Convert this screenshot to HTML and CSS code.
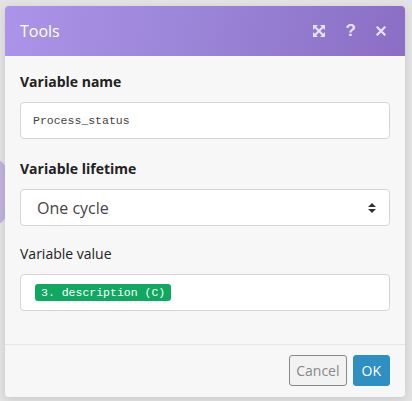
FILE: index.html
```html
<!DOCTYPE html>
<html>
<head>
<meta charset="utf-8">
<link rel="stylesheet" href="styles.css">
</head>
<body>
<div class="stage">
  <div class="peek"></div>
  <div class="modal">
    <div class="header">
      <span class="title">Tools</span>
      <div class="tools">
        <svg class="ico" width="14" height="14" viewBox="0 0 14 14" fill="none" stroke="#e8e2f7" stroke-width="2">
          <path d="M3 3 L11 11 M11 3 L3 11"/>
          <path d="M1 1 H6 L1 6 Z M13 1 H8 L13 6 Z M1 13 H6 L1 8 Z M13 13 H8 L13 8 Z" fill="#e8e2f7" stroke="none"/>
        </svg>
        <span class="q">?</span>
        <svg class="ico x" width="10" height="10" viewBox="0 0 10 10" stroke="#e8e2f7" stroke-width="2.2" stroke-linecap="square">
          <path d="M1.5 1.5 L8.5 8.5 M8.5 1.5 L1.5 8.5"/>
        </svg>
      </div>
    </div>
    <div class="body">
      <label class="lbl bold">Variable name</label>
      <div class="field mono">Process_status</div>
      <label class="lbl bold gap">Variable lifetime</label>
      <div class="field select">
        <span>One cycle</span>
        <svg width="8" height="12" viewBox="0 0 8 12" fill="#333"><path d="M4 1 L8 5 H0 Z M0 7 H8 L4 11 Z"/></svg>
      </div>
      <label class="lbl gap2">Variable value</label>
      <div class="field value"><span class="pill">3. description (C)</span></div>
    </div>
    <div class="footer">
      <button class="btn cancel">Cancel</button>
      <button class="btn ok">OK</button>
    </div>
  </div>
</div>
</body>
</html>
```
FILE: styles.css
```css
html, body { margin: 0; padding: 0; }
body {
  width: 412px; height: 401px; overflow: hidden;
  background: #e3e3e3;
  font-family: "Open Sans", "Liberation Sans", sans-serif;
}
.stage { position: relative; padding: 6px 7px 0 5px; }
.peek {
  position: absolute; left: -14px; top: 160px; width: 20px; height: 64px;
  background: #c1b2de; border-radius: 10px;
}
.modal {
  position: relative;
  width: 400px; background: #f7f7f7; border-radius: 4px;
  box-shadow: 0 2px 8px rgba(0,0,0,0.12);
  overflow: hidden;
}
.header {
  height: 50px; display: flex; align-items: center; justify-content: space-between;
  padding: 0 19px 0 15px;
  background: linear-gradient(100deg, #ab94e9 0%, #9a84d6 50%, #8a6ec5 100%);
}
.title { color: #fff; font-size: 16px; }
.tools { display: flex; align-items: center; gap: 0; }
.ico { display: block; }
.q { color: #e8e2f7; font-weight: 700; font-size: 17px; margin: 0 20px 0 20px; font-family: "Liberation Sans", sans-serif; }
.body { padding: 16px 15px 33px 15px; display: flex; flex-direction: column; }
.lbl { font-size: 14px; color: #222; line-height: 20px; }
.bold { font-weight: 700; }
.gap { margin-top: 20px; }
.gap2 { margin-top: 18px; }
.field {
  margin-top: 10px; height: 35px; background: #fff; border: 1px solid #d6d6d6;
  border-radius: 4px; display: flex; align-items: center; padding: 0 12px;
}
.mono { font-family: "Liberation Mono", monospace; font-size: 11.5px; color: #444; }
.select { justify-content: space-between; font-size: 16px; color: #444; padding: 0 13px 0 16px; }
.value { padding: 0 14px; }
.pill {
  background: #10a760; color: #fff; font-family: "Liberation Mono", monospace; font-size: 11.5px;
  padding: 1px 6px; border-radius: 3px; line-height: 15px;
}
.footer {
  border-top: 1px solid #e6e6e6; padding: 10px 15px 11px; display: flex; justify-content: flex-end; gap: 6px;
}
.btn {
  font-family: "Open Sans", "Liberation Sans", sans-serif; font-size: 14px; height: 31px;
  border-radius: 3px; padding: 0 6px; cursor: pointer;
}
.cancel { background: #f2f2f2; border: 1px solid #888; color: #888; }
.ok { background: #2f8ec2; border: 1px solid #2f8ec2; color: #fff; padding: 0 8px; }
```
